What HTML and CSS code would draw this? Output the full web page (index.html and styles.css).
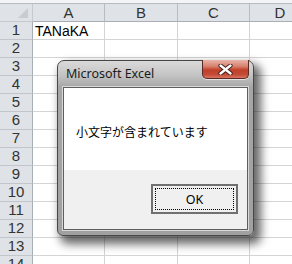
FILE: index.html
```html
<!DOCTYPE html>
<html>
<head>
<meta charset="utf-8">
<link rel="stylesheet" href="styles.css">
</head>
<body>
<div class="sheet">
  <div class="topstrip"></div>
  <div class="grid">
    <div class="corner"><span class="tri"></span></div>
    <div class="colh">A</div>
    <div class="colh">B</div>
    <div class="colh">C</div>
    <div class="colh last">D</div>

    <div class="rowh">1</div><div class="cell">TANaKA</div><div class="cell"></div><div class="cell"></div><div class="cell last"></div>
    <div class="rowh">2</div><div class="cell"></div><div class="cell"></div><div class="cell"></div><div class="cell last"></div>
    <div class="rowh">3</div><div class="cell"></div><div class="cell"></div><div class="cell"></div><div class="cell last"></div>
    <div class="rowh">4</div><div class="cell"></div><div class="cell"></div><div class="cell"></div><div class="cell last"></div>
    <div class="rowh">5</div><div class="cell"></div><div class="cell"></div><div class="cell"></div><div class="cell last"></div>
    <div class="rowh">6</div><div class="cell"></div><div class="cell"></div><div class="cell"></div><div class="cell last"></div>
    <div class="rowh">7</div><div class="cell"></div><div class="cell"></div><div class="cell"></div><div class="cell last"></div>
    <div class="rowh">8</div><div class="cell"></div><div class="cell"></div><div class="cell"></div><div class="cell last"></div>
    <div class="rowh">9</div><div class="cell"></div><div class="cell"></div><div class="cell"></div><div class="cell last"></div>
    <div class="rowh">10</div><div class="cell"></div><div class="cell"></div><div class="cell"></div><div class="cell last"></div>
    <div class="rowh">11</div><div class="cell"></div><div class="cell"></div><div class="cell"></div><div class="cell last"></div>
    <div class="rowh">12</div><div class="cell"></div><div class="cell"></div><div class="cell"></div><div class="cell last"></div>
    <div class="rowh">13</div><div class="cell"></div><div class="cell"></div><div class="cell"></div><div class="cell last"></div>
    <div class="rowh">14</div><div class="cell"></div><div class="cell"></div><div class="cell"></div><div class="cell last"></div>
  </div>

  <div class="dialog">
    <div class="titlebar">
      <span class="title">Microsoft Excel</span>
      <div class="close">
        <svg width="17" height="11" viewBox="0 0 17 11">
          <path d="M3.5 1.5 L13.5 9.5 M13.5 1.5 L3.5 9.5" stroke="#3a1a14" stroke-width="4.2" stroke-linecap="round"/>
          <path d="M3.5 1.5 L13.5 9.5 M13.5 1.5 L3.5 9.5" stroke="#ffffff" stroke-width="2.4" stroke-linecap="round"/>
        </svg>
      </div>
    </div>
    <div class="client">
      <div class="msgarea"><p class="msg">小文字が含まれています</p></div>
      <div class="btnarea">
        <div class="okbtn"><div class="focus">OK</div></div>
      </div>
    </div>
  </div>
</div>
</body>
</html>
```

FILE: styles.css
```css
html, body {
  margin: 0;
  padding: 0;
  background: #ffffff;
  overflow: hidden;
}
.sheet {
  position: relative;
  width: 292px;
  height: 264px;
  overflow: hidden;
  font-family: "Liberation Sans", Arial, sans-serif;
}
.topstrip {
  height: 3px;
  background: #f3f4f6;
  border-bottom: 1px solid #b8bcc2;
}
.grid {
  display: grid;
  grid-template-columns: 33px 72px 73px 72px 60px;
  grid-auto-rows: 18px;
}
.corner, .colh, .rowh, .cell {
  box-sizing: border-box;
  border-right: 1px solid #c6cad0;
  border-bottom: 1px solid #c6cad0;
}
.corner {
  background: #dfe3e8;
  position: relative;
}
.tri {
  position: absolute;
  right: 4px;
  bottom: 3px;
  width: 0;
  height: 0;
  border-left: 10px solid transparent;
  border-bottom: 10px solid #c8ccd2;
}
.colh {
  background: #dfe3e8;
  color: #333;
  font-size: 15px;
  line-height: 17px;
  text-align: center;
  border-right-color: #b8bcc2;
  border-bottom-color: #a9aeb5;
}
.rowh {
  background: #dfe3e8;
  color: #333;
  font-size: 15px;
  line-height: 16px;
  text-align: center;
  border-right-color: #a9aeb5;
  border-bottom-color: #c2c6cc;
}
.cell {
  border-right-color: #d4d4d4;
  border-bottom-color: #d4d4d4;
  font-size: 14px;
  line-height: 18px;
  padding-left: 2px;
  color: #000;
}
.last {
  border-right: none;
}

.dialog {
  position: absolute;
  left: 57px;
  top: 60px;
  width: 197px;
  height: 176px;
  box-sizing: border-box;
  border: 1px solid #474747;
  border-radius: 7px 7px 6px 6px;
  background: linear-gradient(#dadada, #c4c4c4 14px, #a6a6a6 26px, #a0a0a0);
  box-shadow: 5px 6px 10px 2px rgba(0,0,0,0.6);
  display: flex;
  flex-direction: column;
  padding: 0 5px 5px 5px;
}
.titlebar {
  position: relative;
  height: 26px;
  flex: none;
}
.title {
  position: absolute;
  left: 3px;
  top: 5px;
  font-family: "Noto Sans", "Liberation Sans", sans-serif;
  font-size: 12.5px;
  color: #1a1a1a;
  line-height: 16px;
}
.close {
  position: absolute;
  left: 139px;
  top: -1px;
  width: 47px;
  height: 19px;
  box-sizing: border-box;
  border: 1px solid #5b2a22;
  border-top: none;
  border-radius: 0 0 5px 5px;
  background: linear-gradient(#e8b4a8, #d8826f 35%, #c1402a 55%, #c24a34 80%, #d87462);
  box-shadow: 0 1px 0 rgba(255,255,255,0.6);
  display: flex;
  align-items: center;
  justify-content: center;
}
.close svg {
  display: block;
}
.client {
  flex: 1;
  display: flex;
  flex-direction: column;
  border: 1px solid #5e5e5e;
  box-shadow: 0 0 0 1px #d8d8d8;
  background: #f0f0f0;
}
.msgarea {
  background: #ffffff;
  height: 82px;
  display: flex;
  align-items: center;
  padding-left: 12px;
}
.msg {
  margin: 0;
  font-family: "Noto Sans CJK JP", sans-serif;
  font-size: 12px;
  color: #000;
  padding-top: 4px;
}
.btnarea {
  flex: 1;
  position: relative;
}
.okbtn {
  position: absolute;
  left: 87px;
  top: 14px;
  width: 87px;
  height: 30px;
  box-sizing: border-box;
  border: 2px solid #707070;
  background: #f0f0f0;
  padding: 2px;
}
.focus {
  height: 100%;
  box-sizing: border-box;
  border: 1px dotted #000;
  display: flex;
  align-items: center;
  justify-content: center;
  font-family: "Noto Sans", "Liberation Sans", sans-serif;
  font-size: 12.5px;
  color: #000;
}
```
